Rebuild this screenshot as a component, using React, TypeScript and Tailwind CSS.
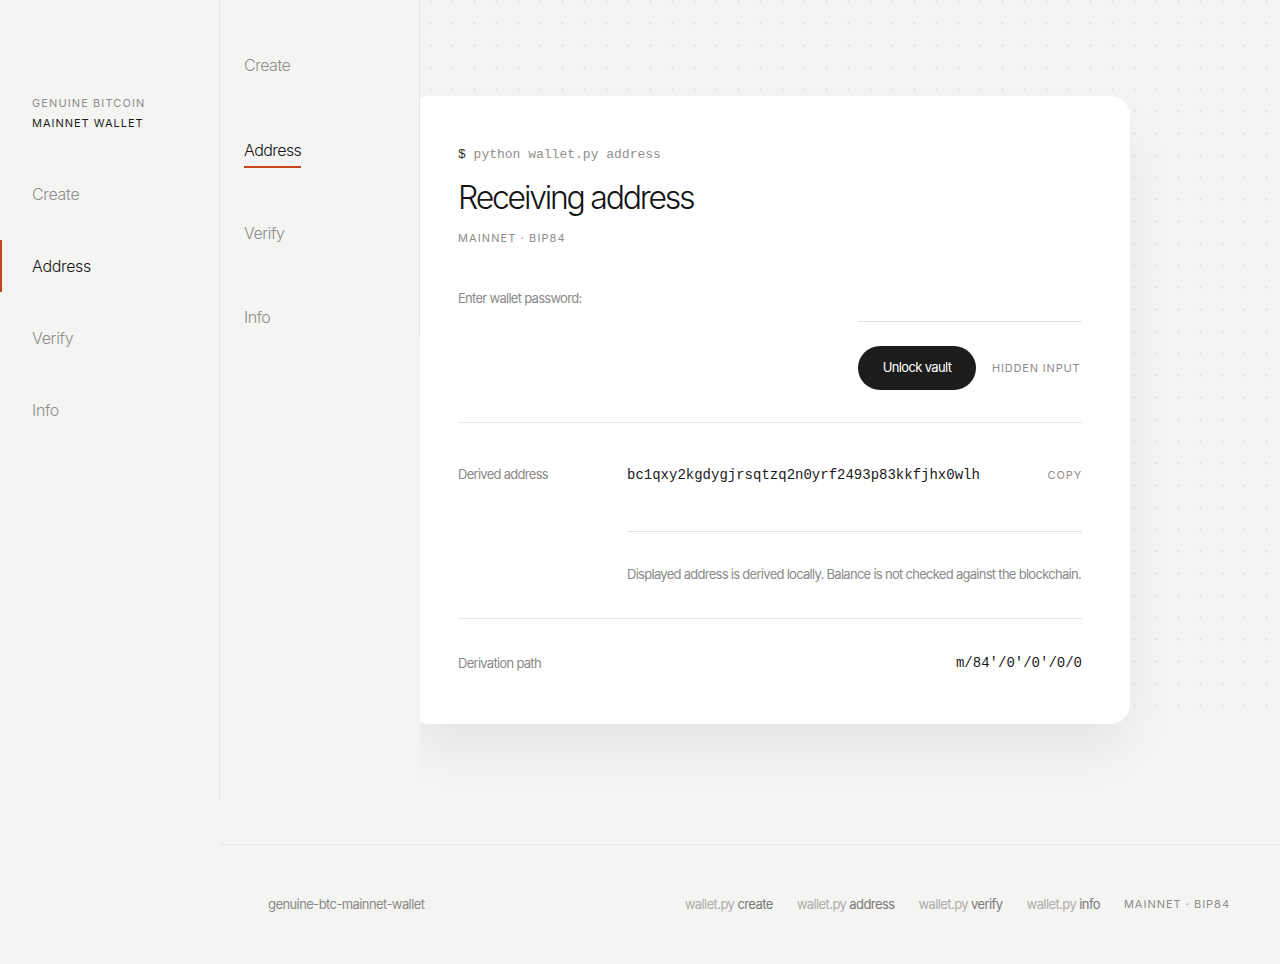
import React from "react";

const sideNav = ["Create", "Address", "Verify", "Info"];
const tabNav = ["Create", "Address", "Verify", "Info"];
const footerLinks = ["create", "address", "verify", "info"];

function Sidebar() {
  return (
    <aside className="w-[220px] h-[800px] shrink-0 border-r border-[#e5e5e3] pt-[95px]">
      <div className="pl-8">
        <div className="text-[11px] leading-4 tracking-[0.1em] text-[#8d8d8b]">GENUINE BITCOIN</div>
        <div className="mt-1 text-[11px] leading-4 tracking-[0.09em] text-[#1d1d1b]">MAINNET WALLET</div>
      </div>
      <ul className="mt-[37px] flex flex-col gap-5">
        {sideNav.map((item) => {
          const active = item === "Address";
          return (
            <li
              key={item}
              className={
                active
                  ? "h-[52px] flex items-center pl-[30px] border-l-2 border-[#c7461a] text-[16px] font-light tracking-[-0.02em] text-[#161616]"
                  : "h-[52px] flex items-center pl-8 text-[16px] font-light tracking-[-0.02em] text-[#8e8e8c]"
              }
            >
              {item}
            </li>
          );
        })}
      </ul>
    </aside>
  );
}

function Tabs() {
  return (
    <nav className="w-[200px] h-[337px] shrink-0 border-r border-[#e5e5e3] pt-[57px] pl-6">
      {tabNav.map((item, i) => {
        const active = item === "Address";
        return (
          <div key={item} className={i < tabNav.length - 1 ? "h-[84px] flex items-start" : "h-4 flex items-start"}>
            <span
              className={
                active
                  ? "block text-[16px] leading-4 font-light tracking-[-0.035em] text-[#161616] pt-px pb-2 border-b-2 border-[#c7461a]"
                  : "block text-[16px] leading-4 font-light tracking-[-0.03em] text-[#8e8e8c]"
              }
            >
              {item}
            </span>
          </div>
        );
      })}
    </nav>
  );
}

function Card() {
  return (
    <section className="relative ml-[-10px] mt-[96px] w-[720px] bg-white rounded-[20px] px-12 pt-12 pb-[51px] shadow-[0_28px_56px_-6px_rgba(0,0,0,0.07)]">
      <p className="pt-px font-['Liberation_Mono',monospace] text-[13px] leading-5 text-[#2a2a2a]">
        $ <span className="text-[#8f8f8f]">python wallet.py address</span>
      </p>
      <h1 className="mt-[13px] text-[32px] leading-[40px] font-light tracking-[-0.07em] text-[#141414]">
        Receiving address
      </h1>
      <p className="mt-3 text-[11px] leading-4 tracking-[0.1em] text-[#8d8d8b]">MAINNET · BIP84</p>

      <div className="mt-[42px] flex justify-between">
        <label className="text-[13px] leading-5 tracking-[-0.055em] text-[#8a8a88]">Enter wallet password:</label>
        <div className="w-[224px] shrink-0">
          <div className="h-[34px] border-b border-[#e3e3e1]" />
          <div className="mt-6 flex items-center gap-4">
            <button className="w-[118px] h-[44px] shrink-0 rounded-full bg-[#1c1c1c] text-white text-[13px] tracking-[-0.05em]">
              Unlock vault
            </button>
            <span className="whitespace-nowrap text-[11px] tracking-[0.075em] text-[#8d8d8b]">HIDDEN INPUT</span>
          </div>
        </div>
      </div>

      <div className="mt-8 h-px bg-[#e8e8e6]" />

      <div className="pt-[41px] flex">
        <div className="w-[169px] shrink-0 text-[13px] leading-5 tracking-[-0.055em] text-[#8a8a88]">Derived address</div>
        <div className="flex-1">
          <div className="h-[68px] border-b border-[#e3e3e1] flex justify-between items-start">
            <span className="pt-px font-['Liberation_Mono',monospace] text-[14px] leading-5 text-[#1a1a1a]">
              bc1qxy2kgdygjrsqtzq2n0yrf2493p83kkfjhx0wlh
            </span>
            <span className="text-[11px] leading-5 tracking-[0.08em] text-[#8d8d8b] pt-px">COPY</span>
          </div>
          <p className="mt-8 whitespace-nowrap text-[13px] leading-5 tracking-[-0.055em] text-[#8a8a88]">
            Displayed address is derived locally. Balance is not checked against the blockchain.
          </p>
        </div>
      </div>

      <div className="mt-[34px] h-px bg-[#e8e8e6]" />

      <div className="pt-[33px] flex justify-between items-center">
        <span className="text-[13px] leading-5 tracking-[-0.055em] text-[#8a8a88]">Derivation path</span>
        <span className="pt-px font-['Liberation_Mono',monospace] text-[14px] leading-5 text-[#1a1a1a]">m/84'/0'/0'/0/0</span>
      </div>
    </section>
  );
}

function Footer() {
  return (
    <footer className="h-[120px] border-t border-[#e5e5e3] flex items-center justify-between pl-12 pr-[50px]">
      <span className="text-[13px] tracking-[-0.045em] text-[#8a8a88]">genuine-btc-mainnet-wallet</span>
      <div className="flex items-center gap-6">
        {footerLinks.map((cmd) => (
          <span key={cmd} className="text-[13px] tracking-[-0.045em]">
            <span className="text-[#adadab]">wallet.py </span>
            <span className="text-[#7a7a78]">{cmd}</span>
          </span>
        ))}
        <span className="text-[11px] tracking-[0.09em] text-[#8d8d8b]">MAINNET · BIP84</span>
      </div>
    </footer>
  );
}

export default function App() {
  return (
    <div className="min-h-[964px] bg-[#f4f4f2] flex font-['Inter',sans-serif]">
      <Sidebar />
      <div className="flex-1 flex flex-col">
        <div className="h-[844px] flex">
          <Tabs />
          <main className="relative flex-1 overflow-hidden">
            {/* dotted backdrop */}
            <div className="absolute top-0 left-0 right-0 h-[716px] bg-[radial-gradient(circle,#dededc_0.8px,transparent_1.1px)] bg-[length:22px_22px] bg-[position:-0.5px_-9.5px]" />
            <Card />
          </main>
        </div>
        <Footer />
      </div>
    </div>
  );
}
